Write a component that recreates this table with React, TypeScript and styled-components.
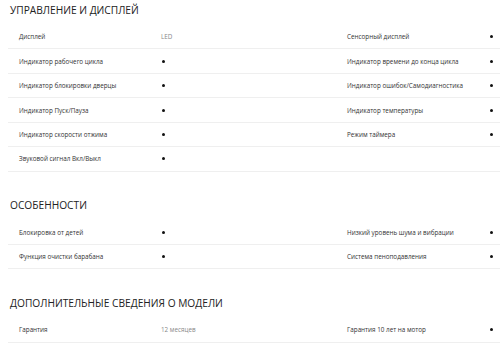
import { FC } from "react";
import styled, { createGlobalStyle } from "styled-components";

type Cell = { label: string; value?: string; check?: boolean };

interface Section {
  title: string;
  rows: [Cell, Cell?][];
}

const sections: Section[] = [
  {
    title: "УПРАВЛЕНИЕ И ДИСПЛЕЙ",
    rows: [
      [{ label: "Дисплей", value: "LED" }, { label: "Сенсорный дисплей", check: true }],
      [
        { label: "Индикатор рабочего цикла", check: true },
        { label: "Индикатор времени до конца цикла", check: true },
      ],
      [
        { label: "Индикатор блокировки дверцы", check: true },
        { label: "Индикатор ошибок/Самодиагностика", check: true },
      ],
      [
        { label: "Индикатор Пуск/Пауза", check: true },
        { label: "Индикатор температуры", check: true },
      ],
      [
        { label: "Индикатор скорости отжима", check: true },
        { label: "Режим таймера", check: true },
      ],
      [{ label: "Звуковой сигнал Вкл/Выкл", check: true }],
    ],
  },
  {
    title: "ОСОБЕННОСТИ",
    rows: [
      [
        { label: "Блокировка от детей", check: true },
        { label: "Низкий уровень шума и вибрации", check: true },
      ],
      [
        { label: "Функция очистки барабана", check: true },
        { label: "Система пеноподавления", check: true },
      ],
    ],
  },
  {
    title: "ДОПОЛНИТЕЛЬНЫЕ СВЕДЕНИЯ О МОДЕЛИ",
    rows: [
      [
        { label: "Гарантия", value: "12 месяцев" },
        { label: "Гарантия 10 лет на мотор", check: true },
      ],
    ],
  },
];

const GlobalStyle = createGlobalStyle`
  html, body {
    margin: 0;
    padding: 0;
    background: #fff;
  }
  body {
    font-family: "Open Sans", "Liberation Sans", sans-serif;
    color: #333;
    overflow: hidden;
  }
`;

const Page = styled.div`
  width: 500px;
  padding: 2px 0 0 8px;
  box-sizing: border-box;
`;

const StyledSection = styled.section`
  margin-bottom: 25.8px;
`;

const Title = styled.h2`
  margin: 0 0 7px 2px;
  font-size: 10.2px;
  line-height: 16px;
  font-weight: 400;
  color: #222;
`;

const Row = styled.div`
  display: grid;
  grid-template-columns: 142px 186px 142px 1fr;
  align-items: center;
  height: 24.45px;
  box-sizing: border-box;
  padding-left: 11px;
  border-bottom: 1px solid #efefef;
  font-size: 6.3px;
`;

const Label = styled.span`
  color: #333;
  white-space: nowrap;
`;

const Value = styled.span`
  color: #888;
  white-space: nowrap;
`;

const Dot = styled.span`
  display: block;
  width: 3px;
  height: 3px;
  border-radius: 50%;
  background: #111;
  margin-left: 1px;
`;

const CellView: FC<{ cell?: Cell }> = ({ cell }) => {
  if (!cell) {
    return (
      <>
        <span />
        <span />
      </>
    );
  }
  return (
    <>
      <Label>{cell.label}</Label>
      {cell.check ? <Dot /> : <Value>{cell.value}</Value>}
    </>
  );
};

export default function App() {
  return (
    <Page>
      <GlobalStyle />
      {sections.map((s) => (
        <StyledSection key={s.title}>
          <Title>{s.title}</Title>
          {s.rows.map((r, i) => (
            <Row key={i}>
              <CellView cell={r[0]} />
              <CellView cell={r[1]} />
            </Row>
          ))}
        </StyledSection>
      ))}
    </Page>
  );
}
